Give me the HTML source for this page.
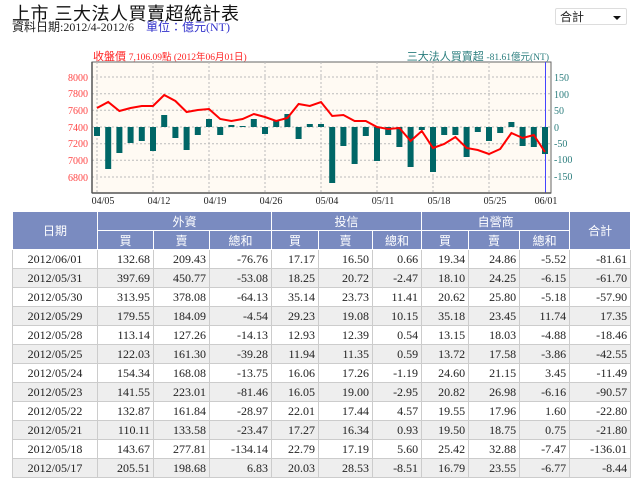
<!DOCTYPE html>
<html><head><meta charset="utf-8">
<style>
body{margin:0;width:640px;height:478px;overflow:hidden;background:#fff;position:relative;font-family:"Liberation Sans","Noto Sans CJK TC",sans-serif;}
.t1{position:absolute;left:12px;top:0px;font-size:18px;color:#111;letter-spacing:0.5px}
.t2{position:absolute;left:12px;top:18px;font-size:12px;color:#222;font-family:"Liberation Serif","Noto Sans CJK TC",serif}
.t2 span{color:#3333cc;margin-left:12px}
.sel{position:absolute;left:555px;top:8px;width:72px;height:17px;border:1px solid #ddd;border-radius:2px;font-size:12px;line-height:17px;box-sizing:border-box;padding-left:4px;color:#222}
.sel i{position:absolute;right:5px;top:7px;border-left:4px solid transparent;border-right:4px solid transparent;border-top:4px solid #111}
svg{position:absolute;left:0;top:0}
table{position:absolute;left:12px;top:211px;border-collapse:collapse;table-layout:fixed;width:618px}
th{background:#7a8bc0;color:#fff;font-weight:normal;font-size:12px;border:1px solid #fff;height:18px;padding:0}
td{font-family:"Liberation Serif","Noto Sans CJK TC",serif;font-size:12px;color:#222;border:1px solid #ccc;height:18px;padding:0 3px 0 0;text-align:right;white-space:nowrap}
td:first-child{text-align:center;padding:0}
tr:nth-child(even) td{background:#eee}
</style></head><body>
<div class="t1">上市 三大法人買賣超統計表</div>
<div class="t2">資料日期:2012/4-2012/6<span>單位：億元(NT)</span></div>
<div class="sel">合計<i></i></div>
<svg width="640" height="210" xmlns="http://www.w3.org/2000/svg" font-family="Liberation Serif, Noto Sans CJK TC, serif">
<text x="93" y="60" font-size="11" fill="#ff2222">收盤價 <tspan font-size="9.5">7,106.09點 (2012年06月01日)</tspan></text>
<text x="549" y="60" font-size="11" fill="#2a7d7d" text-anchor="end">三大法人買賣超 <tspan font-size="9.5">-81.61億元(NT)</tspan></text>
<rect x="92" y="62" width="459" height="131" fill="#fffaf3" stroke="#666" stroke-width="1"/>
<g stroke="#bbb" stroke-dasharray="2,2" stroke-width="1">
<line x1="92" x2="551" y1="77" y2="77"/><line x1="92" x2="551" y1="93.7" y2="93.7"/><line x1="92" x2="551" y1="110.3" y2="110.3"/><line x1="92" x2="551" y1="127" y2="127"/><line x1="92" x2="551" y1="143.7" y2="143.7"/><line x1="92" x2="551" y1="160.3" y2="160.3"/><line x1="92" x2="551" y1="177" y2="177"/>
<line y1="62" y2="193" x1="97" x2="97"/><line y1="62" y2="193" x1="153" x2="153"/><line y1="62" y2="193" x1="209" x2="209"/><line y1="62" y2="193" x1="265" x2="265"/><line y1="62" y2="193" x1="321" x2="321"/><line y1="62" y2="193" x1="377" x2="377"/><line y1="62" y2="193" x1="433" x2="433"/><line y1="62" y2="193" x1="489" x2="489"/>
</g>
<line x1="545.5" x2="545.5" y1="62" y2="193" stroke="#4444ff" stroke-width="1"/>
<g id="bars" fill="#006666"></g>
<polyline id="ln" fill="none" stroke="#ff0000" stroke-width="2"/>
<line x1="92" x2="92" y1="62" y2="193" stroke="#555" stroke-width="1.5"/>
<line x1="92" x2="551" y1="193" y2="193" stroke="#555" stroke-width="1.5"/>
<g font-size="10" fill="#ff4444" text-anchor="end">
<text x="88" y="81">8000</text><text x="88" y="97">7800</text><text x="88" y="114">7600</text><text x="88" y="131">7400</text><text x="88" y="147">7200</text><text x="88" y="164">7000</text><text x="88" y="181">6800</text>
</g>
<g font-size="10" fill="#2a7d7d">
<text x="554" y="81">150</text><text x="554" y="98">100</text><text x="554" y="114">50</text><text x="554" y="131">0</text><text x="554" y="147">-50</text><text x="554" y="163">-100</text><text x="554" y="180">-150</text>
</g>
<g font-size="10" fill="#222" text-anchor="middle">
<text x="103" y="204">04/05</text><text x="159" y="204">04/12</text><text x="215" y="204">04/19</text><text x="271" y="204">04/26</text><text x="327" y="204">05/04</text><text x="383" y="204">05/11</text><text x="439" y="204">05/18</text><text x="495" y="204">05/25</text><text x="546" y="204">06/01</text>
</g>
</svg>
<script>
var b=[-9,-42,-26,-16,-14,-24,12,-11,-23,-8,8,-8,2,1,8,-7,6,13,-12,3,3,-56,-19,-37,-9,-34,-8,-20,-40,-3,-45,-8,-8,-30,-5,-14,-6,5,-19,-20,-27];
var l=[108,102,111,108,106,106,95,101,112,110,109,119,121,119,114,117,121,118,104,106,102,116,115,121,121,127,129,128,141,131,148,144,137,148,150,154,149,133,138,135,152];
var g=document.getElementById('bars'),s='',p=[];
for(var i=0;i<41;i++){var x=97+i*11.2,v=b[i];s+='<rect x="'+(x-3)+'" y="'+(v>0?127-v:127)+'" width="6" height="'+Math.abs(v)+'"/>';p.push(x+','+l[i]);}
g.innerHTML=s;document.getElementById('ln').setAttribute('points',p.join(' '));
</script>
<table>
<colgroup><col style="width:85px"><col style="width:56px"><col style="width:56px"><col style="width:62px"><col style="width:47px"><col style="width:54px"><col style="width:49px"><col style="width:47px"><col style="width:51px"><col style="width:50px"><col style="width:61px"></colgroup>
<tr><th rowspan="2">日期</th><th colspan="3">外資</th><th colspan="3">投信</th><th colspan="3">自營商</th><th rowspan="2">合計</th></tr>
<tr><th>買</th><th>賣</th><th>總和</th><th>買</th><th>賣</th><th>總和</th><th>買</th><th>賣</th><th>總和</th></tr>
<tr><td>2012/06/01</td><td>132.68</td><td>209.43</td><td>-76.76</td><td>17.17</td><td>16.50</td><td>0.66</td><td>19.34</td><td>24.86</td><td>-5.52</td><td>-81.61</td></tr>
<tr><td>2012/05/31</td><td>397.69</td><td>450.77</td><td>-53.08</td><td>18.25</td><td>20.72</td><td>-2.47</td><td>18.10</td><td>24.25</td><td>-6.15</td><td>-61.70</td></tr>
<tr><td>2012/05/30</td><td>313.95</td><td>378.08</td><td>-64.13</td><td>35.14</td><td>23.73</td><td>11.41</td><td>20.62</td><td>25.80</td><td>-5.18</td><td>-57.90</td></tr>
<tr><td>2012/05/29</td><td>179.55</td><td>184.09</td><td>-4.54</td><td>29.23</td><td>19.08</td><td>10.15</td><td>35.18</td><td>23.45</td><td>11.74</td><td>17.35</td></tr>
<tr><td>2012/05/28</td><td>113.14</td><td>127.26</td><td>-14.13</td><td>12.93</td><td>12.39</td><td>0.54</td><td>13.15</td><td>18.03</td><td>-4.88</td><td>-18.46</td></tr>
<tr><td>2012/05/25</td><td>122.03</td><td>161.30</td><td>-39.28</td><td>11.94</td><td>11.35</td><td>0.59</td><td>13.72</td><td>17.58</td><td>-3.86</td><td>-42.55</td></tr>
<tr><td>2012/05/24</td><td>154.34</td><td>168.08</td><td>-13.75</td><td>16.06</td><td>17.26</td><td>-1.19</td><td>24.60</td><td>21.15</td><td>3.45</td><td>-11.49</td></tr>
<tr><td>2012/05/23</td><td>141.55</td><td>223.01</td><td>-81.46</td><td>16.05</td><td>19.00</td><td>-2.95</td><td>20.82</td><td>26.98</td><td>-6.16</td><td>-90.57</td></tr>
<tr><td>2012/05/22</td><td>132.87</td><td>161.84</td><td>-28.97</td><td>22.01</td><td>17.44</td><td>4.57</td><td>19.55</td><td>17.96</td><td>1.60</td><td>-22.80</td></tr>
<tr><td>2012/05/21</td><td>110.11</td><td>133.58</td><td>-23.47</td><td>17.27</td><td>16.34</td><td>0.93</td><td>19.50</td><td>18.75</td><td>0.75</td><td>-21.80</td></tr>
<tr><td>2012/05/18</td><td>143.67</td><td>277.81</td><td>-134.14</td><td>22.79</td><td>17.19</td><td>5.60</td><td>25.42</td><td>32.88</td><td>-7.47</td><td>-136.01</td></tr>
<tr><td>2012/05/17</td><td>205.51</td><td>198.68</td><td>6.83</td><td>20.03</td><td>28.53</td><td>-8.51</td><td>16.79</td><td>23.55</td><td>-6.77</td><td>-8.44</td></tr>
</table>
</body></html>
